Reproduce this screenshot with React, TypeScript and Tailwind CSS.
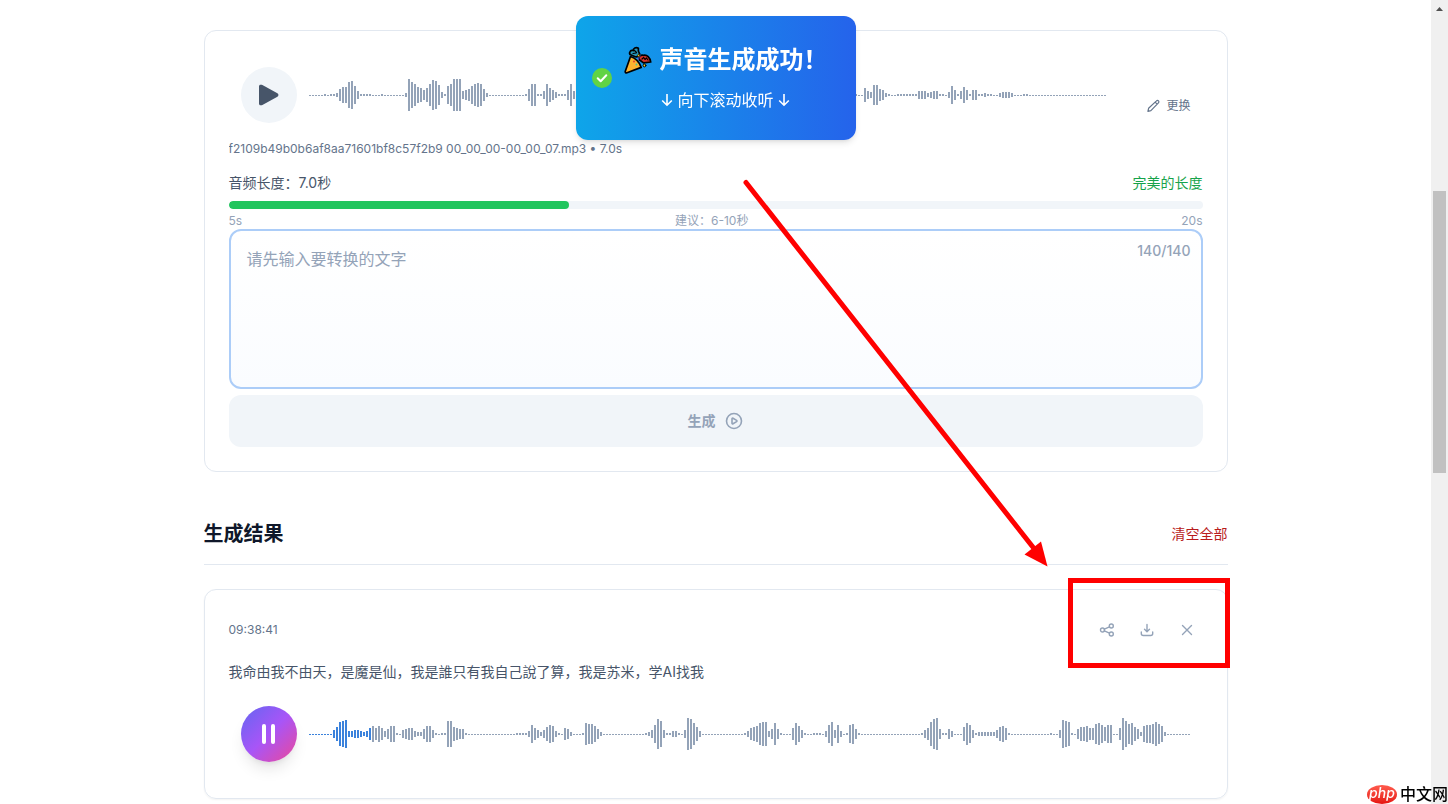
import type { ReactNode } from 'react';

const FONT = "font-['Inter','Noto_Sans_CJK_SC',sans-serif]";

// Each entry is [bar height, how many times it repeats]
type Run = [number, number];

const SOURCE_WAVE: Run[] = [
  [1, 5], [2, 1], [1, 1], [2, 2], [4, 1], [12, 1], [16, 2], [26, 1], [28, 1], [18, 1], [8, 1], [2, 4], [1, 3], [2, 1],
  [1, 7], [4, 1], [32, 1], [26, 1], [22, 1], [16, 1], [14, 1], [10, 1], [14, 1], [22, 1], [30, 1], [28, 1], [20, 1],
  [6, 1], [2, 1], [18, 1], [22, 1], [32, 3], [8, 1], [10, 1], [12, 1], [18, 1], [22, 1], [24, 1], [22, 1], [12, 1],
  [4, 1], [1, 12], [2, 1], [12, 1], [22, 2], [2, 2], [8, 1], [22, 1], [14, 1], [10, 1], [6, 1], [2, 3], [10, 1],
  [22, 1], [8, 1], [1, 93], [2, 1], [1, 2], [14, 1], [8, 1], [6, 1], [20, 2], [12, 1], [10, 1], [4, 1], [2, 1],
  [1, 2], [2, 7], [8, 3], [4, 1], [6, 1], [8, 2], [2, 2], [1, 1], [6, 1], [18, 1], [10, 1], [2, 1], [8, 1], [16, 1],
  [10, 1], [2, 1], [10, 2], [2, 2], [4, 1], [2, 2], [1, 2], [4, 1], [6, 3], [4, 1], [1, 3], [2, 2], [1, 26],
];

const RESULT_WAVE: Run[] = [
  [1, 8], [8, 1], [14, 1], [24, 1], [26, 1], [28, 1], [6, 2], [8, 2], [6, 1], [4, 1], [6, 1], [12, 1], [16, 1],
  [12, 1], [16, 1], [12, 1], [6, 1], [10, 1], [16, 2], [2, 1], [1, 1], [8, 1], [10, 1], [12, 2], [6, 1], [4, 2],
  [10, 1], [16, 2], [8, 1], [2, 1], [1, 1], [2, 2], [26, 2], [14, 1], [12, 1], [10, 2], [2, 1], [1, 16], [2, 4],
  [6, 1], [18, 1], [12, 1], [8, 1], [4, 1], [8, 1], [14, 1], [18, 1], [16, 1], [6, 1], [2, 1], [1, 1], [12, 1],
  [10, 1], [4, 1], [1, 3], [2, 1], [22, 1], [20, 2], [16, 1], [10, 1], [4, 1], [1, 14], [2, 1], [4, 1], [8, 1],
  [18, 1], [30, 1], [26, 1], [8, 1], [2, 2], [6, 2], [2, 1], [1, 1], [8, 1], [32, 1], [30, 1], [22, 1], [14, 1],
  [6, 1], [1, 14], [2, 1], [6, 1], [12, 1], [14, 1], [16, 1], [22, 1], [24, 2], [6, 1], [10, 1], [22, 1], [10, 1],
  [2, 1], [1, 3], [12, 1], [22, 1], [16, 1], [8, 1], [2, 1], [1, 2], [2, 3], [1, 1], [6, 1], [18, 1], [24, 1],
  [8, 1], [18, 1], [6, 1], [1, 1], [2, 1], [18, 1], [20, 1], [10, 1], [2, 1], [1, 20], [2, 1], [8, 1], [12, 1],
  [24, 1], [30, 1], [32, 1], [10, 1], [2, 2], [10, 1], [6, 1], [1, 3], [14, 1], [22, 1], [18, 1], [8, 1], [2, 1],
  [4, 6], [8, 1], [14, 1], [16, 1], [12, 1], [2, 1], [1, 13], [2, 1], [1, 2], [8, 1], [28, 1], [26, 1], [24, 1],
  [2, 1], [1, 1], [10, 1], [14, 2], [16, 1], [12, 2], [20, 1], [22, 1], [18, 1], [14, 1], [18, 2], [1, 2], [12, 1],
  [32, 1], [26, 1], [20, 1], [22, 1], [14, 1], [10, 1], [4, 1], [16, 1], [18, 2], [20, 1], [24, 1], [20, 1],
  [16, 1], [4, 1], [1, 8],
];

function Waveform({ runs, played = 0 }: { runs: Run[]; played?: number }) {
  const bars = runs.flatMap(([height, count]) => Array<number>(count).fill(height));
  return (
    <svg className="h-8 w-full min-w-0 flex-1" shapeRendering="crispEdges" aria-hidden="true">
      {bars.map((h, i) => (
        <rect
          key={i}
          x={i * 3}
          y={h === 1 ? 16 : 16 - h / 2}
          width={2}
          height={h}
          fill={i < played ? '#3b82dc' : '#94a3b8'}
        />
      ))}
    </svg>
  );
}

function PopperIcon() {
  return (
    <svg viewBox="0 0 28 28" className="size-7 shrink-0" stroke="#000" strokeWidth="1.7" strokeLinejoin="round" strokeLinecap="round" aria-hidden="true">
      <path d="M6 8.500C4.700 6 7 3.500 9.300 4.600 9 2.200 12 .8 14.400 2.300c-.6 2.700.2 3.700 1.300 5.700-1 3-3.600 3.400-5.600 2.200Z" fill="#2596b8" />
      <path d="M15 13.500c-.6-3.400 2-5 4.500-4.200 3.400-.8 6.600 2 7.200 6.700l-7.200.9Z" fill="#d8352c" />
      <path d="M6.500 10.500c4.500 1.500 9 6 10.700 10.900L3 26.800c-1.200.4-2-.4-1.700-1.600Z" fill="#fdb52f" />
      <path d="m9 7.500 3-.5M10.500 4.500l2 2M18 13l1.700-1.500 1.300 2 1.500-1.500 1.500 2" strokeWidth="1.2" fill="none" />
      <path d="M14.500 13.500c0-2 .5-3 2-4" fill="none" stroke="#5b3a9b" strokeWidth="1.2" />
      <circle cx="20.500" cy="19.500" r="1.400" fill="#f7d321" strokeWidth="1" />
      <circle cx="14.800" cy="9.500" r="1.200" fill="#f7d321" strokeWidth=".6" />
      <circle cx="12.500" cy="18.500" r="1" fill="#42c7a0" stroke="none" />
      <circle cx="10" cy="15.500" r=".9" fill="#e0362f" stroke="none" />
    </svg>
  );
}

function ArrowDown() {
  return (
    <svg viewBox="0 0 12 16" className="h-4 w-3" fill="none" stroke="currentColor" strokeWidth="1.6" aria-hidden="true">
      <path d="M6 2v11M1.200 8.500 6 13.200l4.800-4.700" />
    </svg>
  );
}

function Toast() {
  return (
    <div
      role="status"
      className="fixed top-4 left-0 right-[17px] z-10 mx-auto flex w-fit items-center rounded-xl bg-linear-to-r/srgb from-[#0ea5e9] to-[#2563eb] py-7 pr-7 pl-4 text-white shadow-md"
    >
      <svg viewBox="0 0 20 20" className="size-5 shrink-0" aria-hidden="true">
        <circle cx="10" cy="10" r="10" fill="#61d345" />
        <path d="m5.700 10.200 3 3 5.600-6" fill="none" stroke="#fff" strokeWidth="2" strokeLinecap="round" strokeLinejoin="round" />
      </svg>
      <div className="ml-3 flex flex-col items-center gap-3">
        <div className="flex items-center gap-2 text-2xl font-bold">
          <PopperIcon />
          <span>声音生成成功！</span>
        </div>
        <div className="flex items-center gap-1 text-base">
          <ArrowDown />
          <span>向下滚动收听</span>
          <ArrowDown />
        </div>
      </div>
    </div>
  );
}

function IconButton({ label, children }: { label: string; children: ReactNode }) {
  return (
    <button type="button" aria-label={label} className="flex size-8 items-center justify-center rounded-lg text-[#94a3b8]">
      <svg viewBox="0 0 16 16" className="size-4" fill="none" stroke="currentColor" strokeWidth="1.4" strokeLinecap="round" strokeLinejoin="round">
        {children}
      </svg>
    </button>
  );
}

function SourceCard() {
  return (
    <section className="rounded-xl border border-slate-200 p-6">
      <div className="flex items-center gap-4">
        <div className="min-w-0 flex-1">
          <div className="flex items-center gap-3 p-3">
            <button type="button" aria-label="播放" className="flex size-14 shrink-0 items-center justify-center rounded-full bg-slate-100 text-[#475569]">
              <svg viewBox="0 0 24 24" className="size-6" fill="currentColor">
                <path d="M3.500 1.700h.7c.4 0 .8.100 1.200.3l15 8.300c1.400.7 1.400 2.700 0 3.400l-15 8.300c-.4.200-.8.300-1.200.3h-.7c-.8 0-1.500-.6-1.500-1.500V3.200c0-.9.7-1.500 1.500-1.500Z" />
              </svg>
            </button>
            <Waveform runs={SOURCE_WAVE} />
          </div>
          <p className="mt-[6px] truncate text-xs text-[#64748b]">
            f2109b49b0b6af8aa71601bf8c57f2b9 00_00_00-00_00_07.mp3 • 7.0s
          </p>
        </div>
        <button type="button" className="flex shrink-0 items-center gap-1 rounded-lg px-3 py-2 text-xs text-[#64748b]">
          <svg viewBox="0 0 16 16" className="size-4" fill="none" stroke="currentColor" strokeWidth="1.2" strokeLinejoin="round" aria-hidden="true">
            <path d="M10.200 3.100c.8-.8 1.700-.9 2.300-.3s.5 1.500-.3 2.300l-7.300 7.500-3 .8.700-3.100ZM9.200 4.200l1.900 1.900" />
          </svg>
          更换
        </button>
      </div>

      <div className="mt-4 flex items-center justify-between text-sm">
        <span className="text-[#475569]">音频长度：7.0秒</span>
        <span className="text-[#16a34a]">完美的长度</span>
      </div>
      <div className="mt-2 h-2 overflow-hidden rounded-full bg-slate-100">
        <div className="h-full w-[35%] rounded-full bg-[#22c55e]" />
      </div>
      <div className="mt-1 flex justify-between text-xs text-[#94a3b8]">
        <span>5s</span>
        <span>建议：6-10秒</span>
        <span>20s</span>
      </div>

      <div className="relative">
        <textarea
          aria-label="要转换的文字"
          placeholder="请先输入要转换的文字"
          className="block h-40 w-full resize-none rounded-xl border-2 border-[#accdf8] bg-linear-to-b from-white to-[#fafcff] p-4 text-base outline-none placeholder:text-[#94a3b8]"
        />
        <span className="absolute top-3 right-3 text-sm font-medium text-[#94a3b8]">140/140</span>
      </div>
      <button type="button" className="mt-[6px] flex h-[52px] w-full items-center justify-center gap-2 rounded-xl bg-slate-100 text-sm font-semibold text-[#94a3b8]">
        生成
        <svg viewBox="0 0 20 20" className="size-5" fill="none" stroke="currentColor" strokeWidth="1.6" strokeLinejoin="round" aria-hidden="true">
          <circle cx="10" cy="10" r="7.500" />
          <path d="M8 7.700c0-.5.500-.8 1-.5l3.600 2.200c.5.300.5.900 0 1.200L9 12.800c-.5.300-1 0-1-.5Z" />
        </svg>
      </button>
    </section>
  );
}

function ResultCard() {
  return (
    <article className="mt-6 rounded-xl border border-slate-200 p-6 shadow-xs">
      <div className="flex items-center justify-between">
        <time className="text-xs text-[#64748b]">09:38:41</time>
        <div className="flex gap-2">
          <IconButton label="分享">
            <circle cx="3.500" cy="8" r="2" />
            <circle cx="12.300" cy="4" r="2" />
            <circle cx="12.300" cy="12" r="2" />
            <path d="m5.300 7.200 5.200-2.400M5.300 8.800l5.200 2.400" />
          </IconButton>
          <IconButton label="下载">
            <path d="M8 2.500v7M5.500 7.300 8 9.800l2.500-2.500M2.300 10v1.500c0 1.200.8 2 2 2h7.400c1.200 0 2-.8 2-2V10" />
          </IconButton>
          <IconButton label="删除">
            <path d="m3.500 3.500 9 9M12.500 3.500l-9 9" />
          </IconButton>
        </div>
      </div>
      <p className="mt-4 text-sm text-[#475569]">
        我命由我不由天，是魔是仙，我是誰只有我自己說了算，我是苏米，学AI找我
      </p>
      <div className="mt-3 flex items-center gap-3 p-3">
        <button
          type="button"
          aria-label="暂停"
          className="flex size-14 shrink-0 items-center justify-center gap-[5px] rounded-full bg-linear-to-br/srgb from-[#6366f1] via-[#a855f7] to-[#ec4899] shadow-lg"
        >
          <span className="h-5 w-1 rounded-full bg-white" />
          <span className="h-5 w-1 rounded-full bg-white" />
        </button>
        <Waveform runs={RESULT_WAVE} played={21} />
      </div>
    </article>
  );
}

function Annotations() {
  return (
    <svg className="pointer-events-none fixed inset-0 z-20 size-full" aria-hidden="true">
      <path d="M746 182.500 1036 551" stroke="#f00" strokeWidth="5" strokeLinecap="round" />
      <path d="m1047.500 566.500-23-12L1041 541.500Z" fill="#f00" />
      <rect x="1070.500" y="580.500" width="157" height="85" fill="none" stroke="#f00" strokeWidth="5" />
    </svg>
  );
}

function Scrollbar() {
  return (
    <div className="flex w-[17px] shrink-0 flex-col items-center bg-[#f0f0f0]" aria-hidden="true">
      <svg viewBox="0 0 17 17" className="size-[17px]">
        <path d="M5 11h7L8.500 7Z" fill="#505050" />
      </svg>
      <div className="mt-[174px] h-[282px] w-[13px] bg-[#c1c1c1]" />
    </div>
  );
}

export default function App() {
  return (
    <div className={`flex h-screen overflow-hidden bg-white ${FONT}`}>
      <main className="min-w-0 flex-1 overflow-hidden">
        <div className="mx-auto max-w-5xl pt-[30px]">
          <SourceCard />
          <div className="mt-12 flex items-center justify-between border-b border-slate-200 pb-4">
            <h2 className="text-xl font-bold text-[#0f172a]">生成结果</h2>
            <button type="button" className="text-sm text-[#b91c1c]">清空全部</button>
          </div>
          <ResultCard />
        </div>
      </main>
      <Scrollbar />
      <Toast />
      <Annotations />
      <div className="fixed right-0 bottom-0 z-30 flex items-center gap-[3px]">
        <span className="flex h-[19px] w-[30px] items-center justify-center rounded-[50%] bg-linear-to-b from-[#ff5a4d] to-[#e60d0d] pb-[2px] text-sm leading-none font-medium text-white italic">
          php
        </span>
        <span className="text-base leading-5 font-medium text-black">中文网</span>
      </div>
    </div>
  );
}
